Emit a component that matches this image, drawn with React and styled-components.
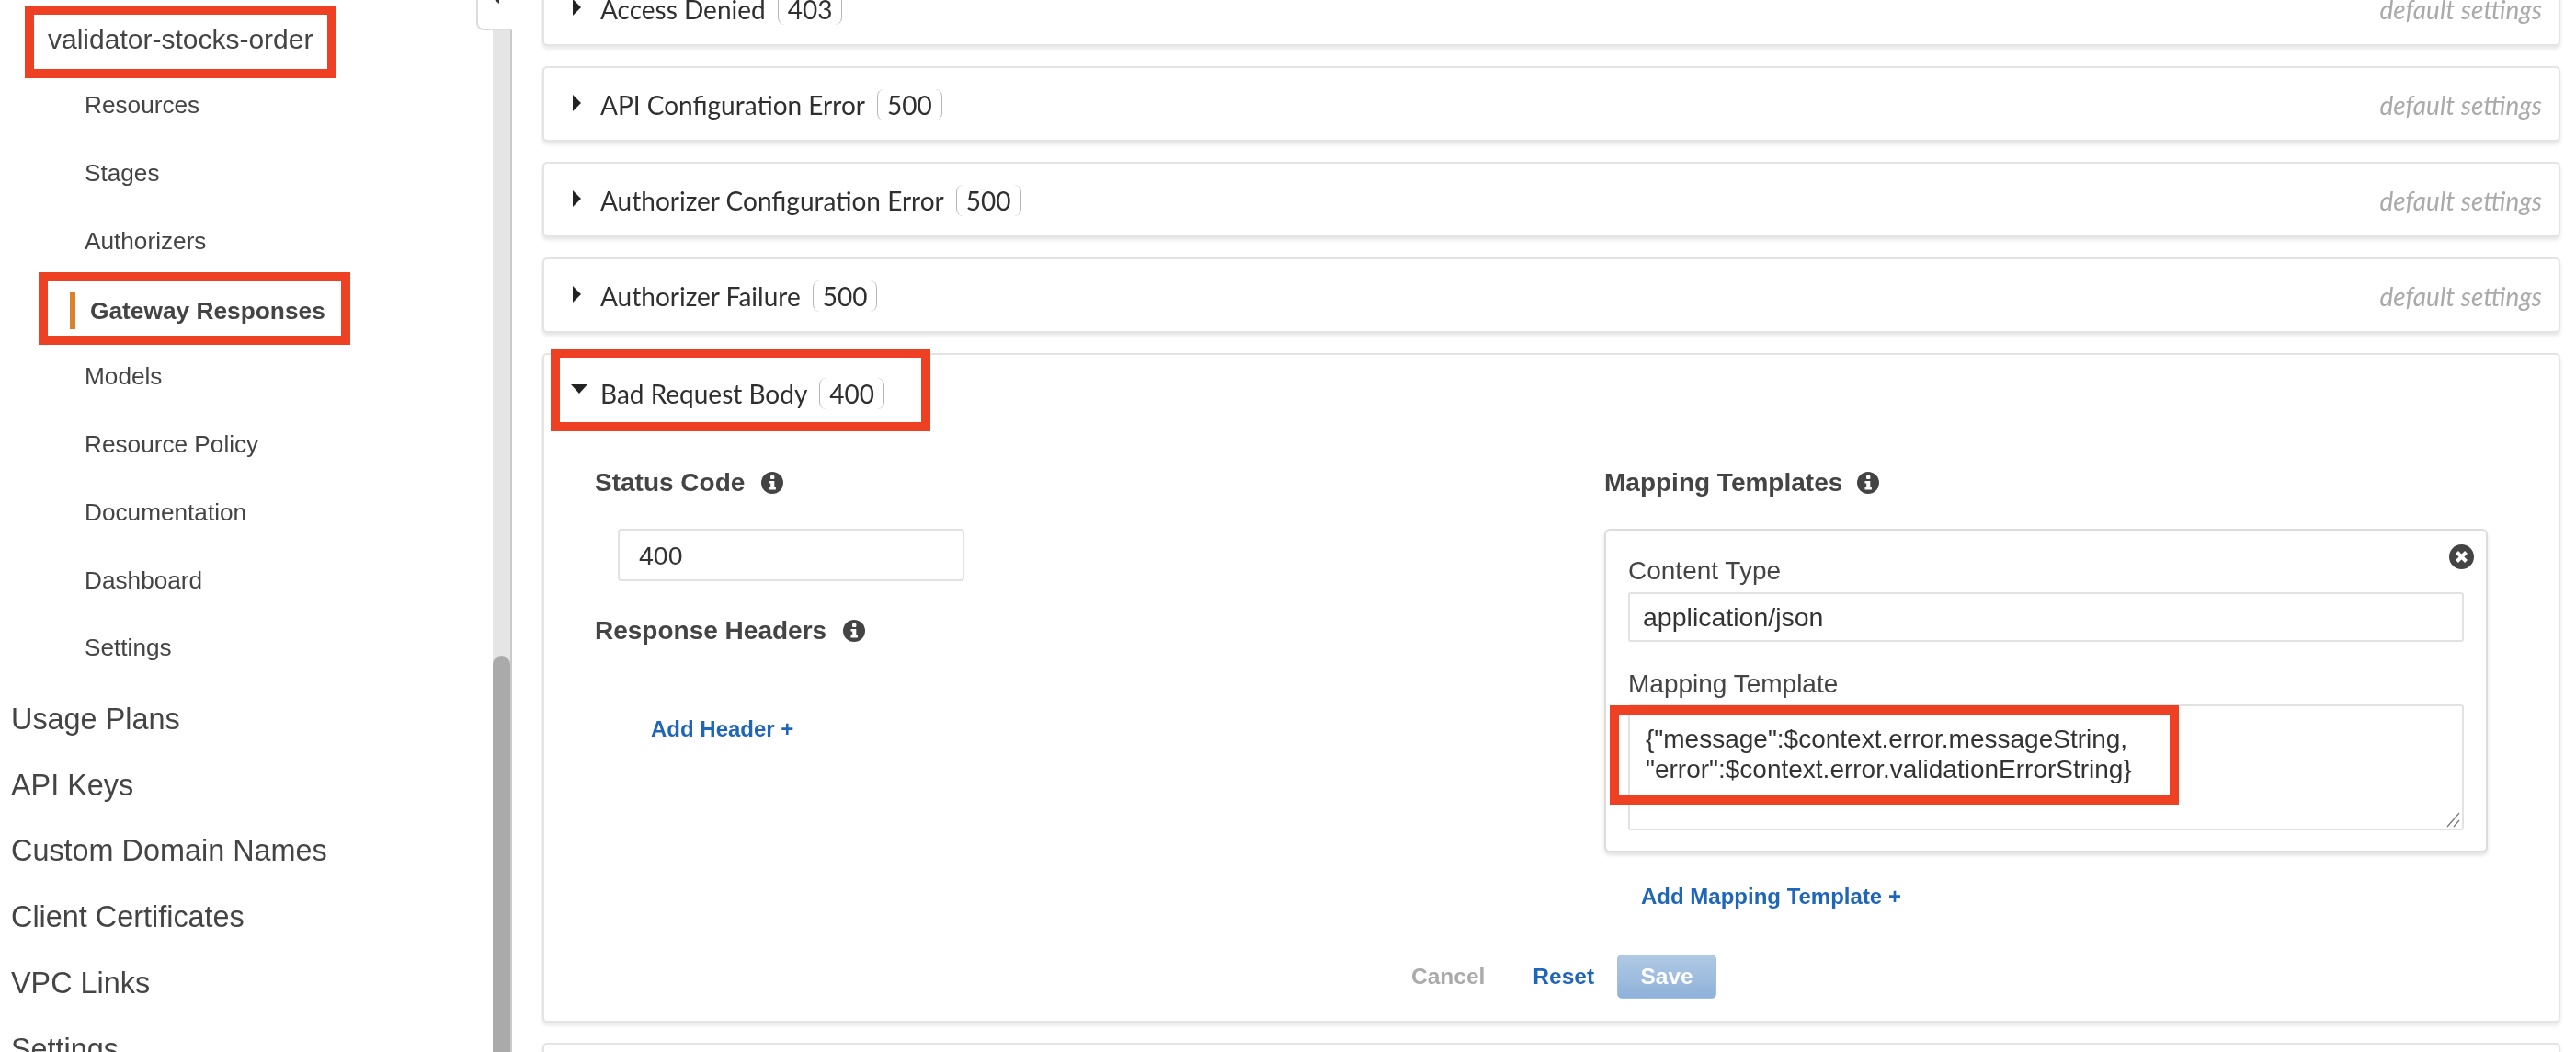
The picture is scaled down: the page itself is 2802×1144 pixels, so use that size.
import React from "react";
import styled, { createGlobalStyle } from "styled-components";

const Global = createGlobalStyle`
  html, body { margin: 0; padding: 0; background: #fff; }
  body { width: 2802px; height: 1144px; overflow: hidden; font-family: "Liberation Sans", Arial, sans-serif; }
  * { box-sizing: border-box; }
`;

const RED = "#ee4023";
const BLUE = "#1f66b8";

const Page = styled.div`
  display: flex;
  width: 2802px;
  height: 1144px;
  overflow: hidden;
  filter: blur(0.5px);
`;

const Sidebar = styled.aside`
  position: relative;
  display: flex;
  flex: none;
  width: 557px;
  height: 1144px;
`;

const Nav = styled.nav`
  flex: none;
  width: 536px;
  color: #444;
`;

const ApiName = styled.div`
  position: relative;
  display: flex;
  align-items: center;
  height: 77px;
  padding: 9px 0 0 52px;
  font-size: 30px;
`;

const SubItem = styled.div`
  position: relative;
  display: flex;
  align-items: center;
  height: 73.75px;
  padding-left: ${(p) => (p.$active ? "98px" : "92px")};
  padding-top: ${(p) => (p.$active ? "7px" : "2px")};
  font-size: ${(p) => (p.$active ? "26.3px" : "26.2px")};
  font-weight: ${(p) => (p.$active ? 700 : 400)};
`;

const ActiveBar = styled.span`
  position: absolute;
  left: 76px;
  top: 20px;
  width: 6px;
  height: 40px;
  background: #d9822b;
`;

const TopList = styled.div`
  margin-top: 6px;
`;

const TopItem = styled.div`
  display: flex;
  align-items: center;
  height: 71.7px;
  padding-left: 12px;
  font-size: 32.4px;
`;

const Track = styled.div`
  flex: none;
  width: 21px;
  margin-top: 32px;
  background: #e5e5e5;
  border-right: 2px solid #c9c9c9;
`;

const Thumb = styled.div`
  width: 19px;
  height: 600px;
  margin-top: 681px;
  background: #aaa;
  border-radius: 10px 10px 0 0;
`;

const CollapseTab = styled.div`
  position: absolute;
  left: 518px;
  top: -6px;
  width: 39px;
  height: 39px;
  background: #fff;
  border: 2px solid #dcdcdc;
  border-top: none;
  border-right: none;
  border-radius: 0 0 0 8px;
`;

const CollapseArrow = styled.svg`
  position: absolute;
  left: 17px;
  top: 5px;
`;

const Highlight = styled.div`
  position: absolute;
  border: 10px solid ${RED};
  pointer-events: none;
  z-index: 5;
  left: ${(p) => p.$l}px;
  top: ${(p) => p.$t}px;
  width: ${(p) => p.$w}px;
  height: ${(p) => p.$h}px;
`;

const Main = styled.main`
  flex: none;
  width: 2195px;
  margin: -32px 0 0 33px;
  display: flex;
  flex-direction: column;
  gap: 22px;
  font-family: Lato, "Liberation Sans", sans-serif;
`;

const Card = styled.section`
  position: relative;
  flex: none;
  height: ${(p) => p.$h}px;
  background: #fff;
  border: 2px solid #e4e4e4;
  border-radius: 5px;
  box-shadow: 0 3px 4px rgba(0, 0, 0, 0.1);
`;

const CardHeader = styled.div`
  display: flex;
  align-items: center;
  height: ${(p) => (p.$open ? "84px" : "78px")};
  padding: ${(p) => (p.$open ? "0" : "2px")} 18px 0 31px;
  font-size: 28px;
  color: #2f2f2f;
`;

const ArrowSlot = styled.span`
  display: flex;
  flex: none;
  width: 30px;
  margin-top: ${(p) => (p.$open ? "-10px" : "-4px")};
  margin-left: ${(p) => (p.$open ? "-2px" : "-1px")};
  margin-right: ${(p) => (p.$open ? "2px" : "1px")};
`;

const CodeBadge = styled.span`
  display: inline-flex;
  align-items: center;
  height: 34px;
  margin-left: 13px;
  padding: 0 10px;
  border-left: 1.5px solid #b5b5b5;
  border-right: 1.5px solid #b5b5b5;
  border-radius: 8px;
`;

const DefaultNote = styled.span`
  margin-left: auto;
  font-style: italic;
  color: #aaa;
`;

const CardBody = styled.div`
  display: grid;
  grid-template-columns: 1098px 973px;
  padding: 35px 0 0 55px;
`;

const Column = styled.div`
  display: flex;
  flex-direction: column;
  align-items: flex-start;
  font-family: "Liberation Sans", sans-serif;
`;

const Heading = styled.div`
  display: flex;
  align-items: center;
  gap: ${(p) => p.$gap || 18}px;
  height: 40px;
  font-size: 28px;
  font-weight: 700;
  color: #444;
`;

const ResponseHeading = styled(Heading)`
  margin-top: 34px;
`;

const StatusField = styled.div`
  display: flex;
  align-items: center;
  width: 377px;
  height: 57px;
  margin: 30px 0 0 25px;
  padding: 2px 0 0 21px;
  background: #fff;
  border: 2px solid #e2e2e2;
  border-radius: 4px;
  font-size: 28.5px;
  color: #333;
`;

const AddLink = styled.div`
  font-size: 24px;
  font-weight: 700;
  color: ${BLUE};
  margin-left: ${(p) => p.$ml}px;
  margin-top: ${(p) => p.$mt}px;
  line-height: 28px;
`;

const TemplateBox = styled.div`
  position: relative;
  width: 961px;
  height: 352px;
  margin-top: 30px;
  padding: 25px 24px 0 24px;
  background: #fff;
  border: 2px solid #dcdcdc;
  border-radius: 6px;
  box-shadow: 0 3px 4px rgba(0, 0, 0, 0.12);
`;

const CloseIcon = styled.svg`
  position: absolute;
  right: 13px;
  top: 15px;
`;

const FieldLabel = styled.div`
  font-size: 28px;
  line-height: 38px;
  color: #444;
`;

const TextField = styled.div`
  display: flex;
  align-items: center;
  height: 54px;
  margin-top: 4px;
  padding-left: 14px;
  border: 2px solid #e2e2e2;
  border-radius: 3px;
  font-size: 28.5px;
  color: #333;
`;

const MappingLabel = styled(FieldLabel)`
  margin-top: 27px;
`;

const TextAreaBox = styled.div`
  position: relative;
  height: 137px;
  margin-top: 3px;
  padding: 19px 0 0 17px;
  border: 2px solid #e2e2e2;
  border-radius: 3px;
  font-size: 28px;
  line-height: 33px;
  color: #333;
  white-space: pre;
`;

const ResizeGrip = styled.svg`
  position: absolute;
  right: 1px;
  bottom: 1px;
`;

const Footer = styled.div`
  display: flex;
  align-items: center;
  height: 48px;
  margin: 49px 0 0 943px;
  font-family: "Liberation Sans", sans-serif;
  font-size: 24.5px;
  font-weight: 700;
`;

const FooterLink = styled.span`
  color: ${(p) => (p.$muted ? "#aaa" : BLUE)};
  margin-right: ${(p) => p.$mr}px;
`;

const SaveButton = styled.div`
  display: flex;
  align-items: center;
  justify-content: center;
  width: 108px;
  height: 48px;
  color: #fff;
  background: linear-gradient(#b0c9e4, #8fb1d9);
  border: 1px solid #a3bfdd;
  border-radius: 5px;
`;

const Right = () => (
  <svg width="11" height="18" viewBox="0 0 11 18"><polygon points="1,0 10,9 1,18" fill="#222" /></svg>
);
const Down = () => (
  <svg width="18" height="10" viewBox="0 0 18 10"><polygon points="0,0 18,0 9,10" fill="#222" /></svg>
);
const Info = () => (
  <svg width="24" height="24" viewBox="0 0 24 24">
    <circle cx="12" cy="12" r="12" fill="#444" />
    <rect x="10" y="4" width="4.4" height="4" rx="1" fill="#fff" />
    <path d="M8.5 10h5.8v7h1.6v2.6H8.5V17h1.7v-4.4H8.5z" fill="#fff" />
  </svg>
);

const collapsed = [
  ["Access Denied", "403"],
  ["API Configuration Error", "500"],
  ["Authorizer Configuration Error", "500"],
  ["Authorizer Failure", "500"],
];
const sub = ["Resources", "Stages", "Authorizers", "Gateway Responses", "Models", "Resource Policy", "Documentation", "Dashboard", "Settings"];
const top = ["Usage Plans", "API Keys", "Custom Domain Names", "Client Certificates", "VPC Links", "Settings"];

export default function App() {
  return (
    <Page>
      <Global />
      <Sidebar>
        <Nav>
          <ApiName>
            validator-stocks-order
            <Highlight $l={27} $t={6} $w={339} $h={79} />
          </ApiName>
          {sub.map((s) => {
            const active = s === "Gateway Responses";
            return (
              <SubItem key={s} $active={active}>
                {active && <ActiveBar />}
                {active && <Highlight $l={42} $t={-2} $w={339} $h={79} />}
                {s}
              </SubItem>
            );
          })}
          <TopList>
            {top.map((s) => (
              <TopItem key={s}>{s}</TopItem>
            ))}
          </TopList>
        </Nav>
        <Track>
          <Thumb />
        </Track>
        <CollapseTab>
          <CollapseArrow width="6" height="6" viewBox="0 0 6 6">
            <polygon points="6,0 0,0 6,5" fill="#333" />
          </CollapseArrow>
        </CollapseTab>
      </Sidebar>
      <Main>
        {collapsed.map(([name, code]) => (
          <Card key={name} $h={82}>
            <CardHeader>
              <ArrowSlot><Right /></ArrowSlot>
              {name}
              <CodeBadge>{code}</CodeBadge>
              <DefaultNote>default settings</DefaultNote>
            </CardHeader>
          </Card>
        ))}
        <Card $h={728}>
          <Highlight $l={7} $t={-7} $w={413} $h={90} />
          <CardHeader $open>
            <ArrowSlot $open><Down /></ArrowSlot>
            Bad Request Body
            <CodeBadge>400</CodeBadge>
          </CardHeader>
          <CardBody>
            <Column>
              <Heading>Status Code <Info /></Heading>
              <StatusField>400</StatusField>
              <ResponseHeading>Response Headers <Info /></ResponseHeading>
              <AddLink $ml={61} $mt={73}>Add Header +</AddLink>
            </Column>
            <Column>
              <Heading $gap={16}>Mapping Templates <Info /></Heading>
              <TemplateBox>
                <CloseIcon width="27" height="27" viewBox="0 0 27 27">
                  <circle cx="13.5" cy="13.5" r="13.5" fill="#444" />
                  <path d="M8.5 8.5l10 10M18.5 8.5l-10 10" stroke="#fff" strokeWidth="4" />
                </CloseIcon>
                <FieldLabel>Content Type</FieldLabel>
                <TextField>application/json</TextField>
                <MappingLabel>Mapping Template</MappingLabel>
                <TextAreaBox>
                  {'{"message":$context.error.messageString,\n"error":$context.error.validationErrorString}'}
                  <Highlight $l={-22} $t={-1} $w={619} $h={108} />
                  <ResizeGrip width="18" height="18" viewBox="0 0 18 18">
                    <path d="M3 17L16 2M10 17l6-7" stroke="#777" strokeWidth="1.2" fill="none" />
                  </ResizeGrip>
                </TextAreaBox>
              </TemplateBox>
              <AddLink $ml={40} $mt={34}>Add Mapping Template +</AddLink>
            </Column>
          </CardBody>
          <Footer>
            <FooterLink $muted $mr={52}>Cancel</FooterLink>
            <FooterLink $mr={25}>Reset</FooterLink>
            <SaveButton>Save</SaveButton>
          </Footer>
        </Card>
        <Card $h={82} />
      </Main>
    </Page>
  );
}
